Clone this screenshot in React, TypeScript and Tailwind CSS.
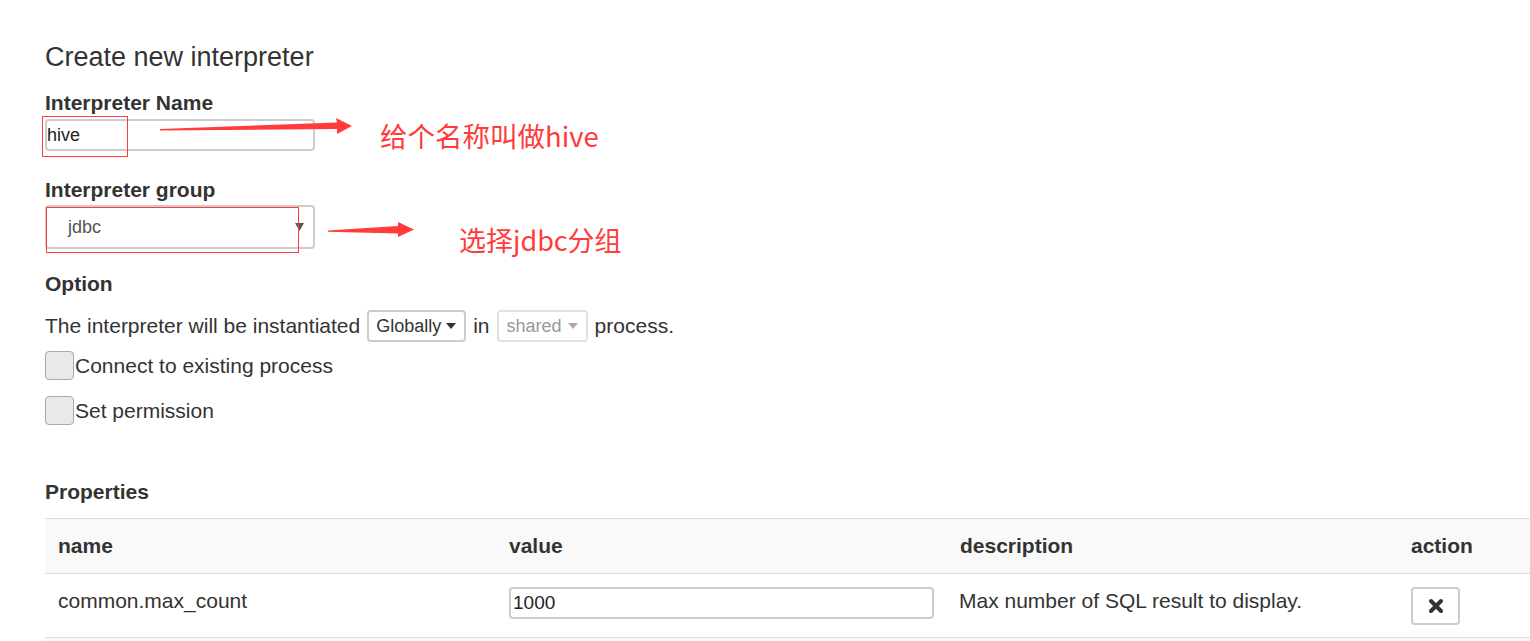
import React from 'react';

const font = { fontFamily: '"Liberation Sans", Arial, sans-serif' };

const Caret: React.FC<{ className?: string; w?: number; h?: number }> = ({ className, w = 10, h = 6 }) => (
  <svg width={w} height={h} viewBox={`0 0 ${w} ${h}`} className={className}>
    <path d={`M0 0 L${w} 0 L${w / 2} ${h} Z`} fill="currentColor" />
  </svg>
);

const Checkbox: React.FC<{ label: string }> = ({ label }) => (
  <label className="flex items-center h-[28px]">
    <span className="block w-[29px] h-[29px] rounded-[4px] border border-[#a9a9a9] bg-[#e9e9e9]" />
    <span className="ml-[1px] mt-[1px] text-[21px] leading-[28px] text-[#333]">{label}</span>
  </label>
);

const Annotations: React.FC = () => (
  <>
    <div className="absolute left-[42px] top-[116px] w-[86px] h-[41px] border border-[#ff3b3b]" />
    <div className="absolute left-[46px] top-[207px] w-[253px] h-[46px] border border-[#ff3b3b]" />
    <svg className="absolute left-0 top-0 pointer-events-none" width="1530" height="641">
      <polygon points="160,129 337,122.5 336,118 352,126 337,134 337,129 160,130.5" fill="#ff3b3b" />
      <polygon points="328,230.5 398,226 398,222 414,229.5 398,237 398,233.5 328,231.8" fill="#ff3b3b" />
    </svg>
    <div
      className="absolute left-[380px] top-[117px] text-[27.5px] leading-[36px] text-[#ff3b3b]"
      style={{ fontFamily: '"Noto Sans CJK SC", "Noto Sans", sans-serif' }}
    >
      给个名称叫做hive
    </div>
    <div
      className="absolute left-[459px] top-[222px] text-[27px] leading-[36px] text-[#ff3b3b]"
      style={{ fontFamily: '"Noto Sans CJK SC", "Noto Sans", sans-serif' }}
    >
      选择jdbc分组
    </div>
  </>
);

export default function App() {
  return (
    <div className="relative w-[1530px] h-[641px] overflow-hidden bg-white text-[#333]" style={font}>
      <div className="pl-[45px] pt-[42px]">
        <h3 className="text-[27px] leading-[30px] text-[#333]">Create new interpreter</h3>

        <div className="mt-[16px] text-[21px] leading-[30px] font-bold">Interpreter Name</div>
        <div className="mt-[1px] w-[270px] h-[32px] rounded-[4px] border-2 border-[#ccc] flex items-center text-[18px] text-[#222]">
          hive
        </div>

        <div className="mt-[24px] text-[21px] leading-[30px] font-bold">Interpreter group</div>
        <div className="w-[270px] h-[44px] rounded-[4px] border-2 border-[#ccc] flex items-center justify-between pl-[21px] pr-[9px] text-[18px] text-[#555]">
          <span>jdbc</span>
          <Caret className="text-[#555]" w={9} h={8} />
        </div>

        <div className="mt-[20px] text-[21px] leading-[30px] font-bold">Option</div>
        <div className="mt-[11px] flex items-center h-[32px] text-[21px]">
          <span>The interpreter will be instantiated</span>
          <span className="ml-[7px] h-[32px] pl-[7px] pr-[8px] flex items-center gap-[5px] rounded-[4px] border-2 border-[#ccc] text-[18px] text-[#333]">
            Globally
            <Caret className="text-[#333]" />
          </span>
          <span className="ml-[7px]">in</span>
          <span className="ml-[7px] h-[32px] px-[8px] flex items-center gap-[6px] rounded-[4px] border-2 border-[#e2e2e2] text-[18px] text-[#999]">
            shared
            <Caret className="text-[#aaa]" />
          </span>
          <span className="ml-[7px]">process.</span>
        </div>

        <div className="mt-[9px]">
          <Checkbox label="Connect to existing process" />
        </div>
        <div className="mt-[17px]">
          <Checkbox label="Set permission" />
        </div>

        <div className="mt-[53px] text-[21px] leading-[30px] font-bold">Properties</div>

        <table className="mt-[11px] w-[1804px] table-fixed border-collapse text-[21px]">
          <thead>
            <tr className="bg-[#f9f9f9] border-t border-b border-[#ddd] h-[55px]">
              <th className="w-[451px] text-left font-bold pl-[13px]">name</th>
              <th className="w-[451px] text-left font-bold pl-[13px]">value</th>
              <th className="w-[451px] text-left font-bold pl-[13px]">description</th>
              <th className="w-[451px] text-left font-bold pl-[13px]">action</th>
            </tr>
          </thead>
          <tbody>
            <tr className="border-b border-[#ddd] h-[64px]">
              <td className="pl-[13px] align-top pt-[15px] leading-[24px]">common.max_count</td>
              <td className="pl-[13px] pr-[13px] align-top pt-[13px]">
                <div className="h-[32px] rounded-[4px] border-2 border-[#ccc] flex items-center pl-[2px] text-[19px] text-[#222]">
                  1000
                </div>
              </td>
              <td className="pl-[12px] align-top pt-[15px] leading-[24px]">Max number of SQL result to display.</td>
              <td className="pl-[13px] align-top pt-[13px]">
                <button className="w-[49px] h-[38px] rounded-[4px] border-2 border-[#ccc] bg-white flex items-center justify-center">
                  <svg width="16" height="16" viewBox="0 0 16 16">
                    <path d="M3 3 L13 13 M13 3 L3 13" stroke="#333" strokeWidth="4" strokeLinecap="round" />
                  </svg>
                </button>
              </td>
            </tr>
            <tr className="bg-[#f9f9f9] h-[64px]">
              <td colSpan={4} />
            </tr>
          </tbody>
        </table>
      </div>
      <Annotations />
    </div>
  );
}
